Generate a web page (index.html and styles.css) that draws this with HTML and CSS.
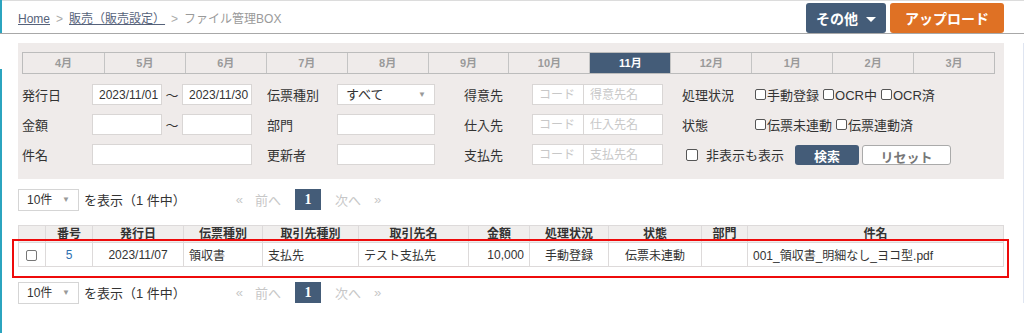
FILE: index.html
```html
<!DOCTYPE html>
<html lang="ja">
<head>
    <meta charset="UTF-8">
    <title>ファイル管理BOX</title>
    <link rel="stylesheet" href="styles.css">
</head>
<body>

<!-- ヘッダー -->
<div class="topbar">
    <div class="breadcrumb">
        <a href="#">Home</a><span class="sep">&gt;</span><a href="#">販売（販売設定）</a><span class="sep">&gt;</span><span class="current">ファイル管理BOX</span>
    </div>
    <div class="top-buttons">
        <button class="btn-other">その他 <span class="caret"></span></button>
        <button class="btn-upload">アップロード</button>
    </div>
</div>

<div class="content">
    <!-- 検索パネル -->
    <div class="search-panel">
        <div class="months">
            <span>4月</span><span>5月</span><span>6月</span><span>7月</span><span>8月</span><span>9月</span>
            <span>10月</span><span class="active">11月</span><span>12月</span><span>1月</span><span>2月</span><span>3月</span>
        </div>

        <div class="form-row">
            <span class="lbl">発行日</span>
            <input class="in-s" type="text" value="2023/11/01">
            <span class="tilde">〜</span>
            <input class="in-s" type="text" value="2023/11/30">
            <span class="lbl lbl-mid">伝票種別</span>
            <div class="select-box">すべて<span class="arrow">▼</span></div>
            <span class="lbl-party">得意先</span>
            <input class="in-code" type="text" placeholder="コード">
            <input class="in-name" type="text" placeholder="得意先名">
            <span class="lbl lbl-right">処理状況</span>
            <span class="chk"><i class="cb"></i>手動登録</span>
            <span class="chk"><i class="cb"></i>OCR中</span>
            <span class="chk"><i class="cb"></i>OCR済</span>
        </div>

        <div class="form-row">
            <span class="lbl">金額</span>
            <input class="in-s" type="text">
            <span class="tilde">〜</span>
            <input class="in-s" type="text">
            <span class="lbl lbl-mid">部門</span>
            <input class="in-m" type="text">
            <span class="lbl-party">仕入先</span>
            <input class="in-code" type="text" placeholder="コード">
            <input class="in-name" type="text" placeholder="仕入先名">
            <span class="lbl lbl-right">状態</span>
            <span class="chk"><i class="cb"></i>伝票未連動</span>
            <span class="chk"><i class="cb"></i>伝票連動済</span>
        </div>

        <div class="form-row">
            <span class="lbl">件名</span>
            <input class="in-l" type="text">
            <span class="lbl lbl-mid">更新者</span>
            <input class="in-m" type="text">
            <span class="lbl-party">支払先</span>
            <input class="in-code" type="text" placeholder="コード">
            <input class="in-name" type="text" placeholder="支払先名">
            <span class="chk chk-hidden"><i class="cb"></i>非表示も表示</span>
            <button class="btn-search">検索</button>
            <button class="btn-reset">リセット</button>
        </div>
    </div>

    <!-- 件数・ページ -->
    <div class="list-bar">
        <div class="count-select">10件<span class="arrow">▼</span></div>
        <span class="count-text">を表示（1 件中）</span>
        <div class="pager">
            <span class="off">«</span><span class="off">前へ</span><span class="page">1</span><span class="off">次へ</span><span class="off">»</span>
        </div>
    </div>

    <div class="table-wrap">
        <table class="list">
            <colgroup>
                <col style="width:27px"><col style="width:47px"><col style="width:91px"><col style="width:79px">
                <col style="width:96px"><col style="width:110px"><col style="width:61px"><col style="width:79px">
                <col style="width:93px"><col style="width:46px"><col>
            </colgroup>
            <thead>
                <tr>
                    <th></th><th>番号</th><th>発行日</th><th>伝票種別</th><th>取引先種別</th><th>取引先名</th>
                    <th>金額</th><th>処理状況</th><th>状態</th><th>部門</th><th>件名</th>
                </tr>
            </thead>
            <tbody>
                <tr>
                    <td class="c"><i class="cb cb-row"></i></td>
                    <td class="c"><a href="#">5</a></td>
                    <td class="c">2023/11/07</td>
                    <td>領収書</td>
                    <td>支払先</td>
                    <td>テスト支払先</td>
                    <td class="r">10,000</td>
                    <td class="c">手動登録</td>
                    <td class="c">伝票未連動</td>
                    <td></td>
                    <td>001_領収書_明細なし_ヨコ型.pdf</td>
                </tr>
            </tbody>
        </table>
        <!-- 注釈の赤枠 -->
        <div class="highlight"></div>
    </div>

    <div class="list-bar list-bar-bottom">
        <div class="count-select">10件<span class="arrow">▼</span></div>
        <span class="count-text">を表示（1 件中）</span>
        <div class="pager">
            <span class="off">«</span><span class="off">前へ</span><span class="page">1</span><span class="off">次へ</span><span class="off">»</span>
        </div>
    </div>
</div>

</body>
</html>
```

FILE: styles.css
```css
body {
    margin: 0;
    font-family: "Liberation Sans", "Noto Sans CJK JP", sans-serif;
    font-size: 12px;
    color: #333;
    background-color: #fff;
    width: 1024px;
    height: 333px;
    overflow: hidden;
    position: relative;
}
body::before {
    content: "";
    position: absolute;
    left: 0;
    top: 0;
    width: 2px;
    height: 33px;
    background-color: #2ba4bf;
}
body::after {
    content: "";
    position: absolute;
    left: 0;
    top: 69px;
    width: 2px;
    bottom: 0;
    background-color: #2ba4bf;
}

/* ヘッダー */
.topbar {
    height: 32px;
    border-top: 1px solid #dcdcdc;
    border-bottom: 1px solid #a8a8a8;
    display: flex;
    align-items: center;
    justify-content: space-between;
    padding: 0 20px 0 18px;
}
.breadcrumb a {
    color: #56627a;
    text-decoration: underline;
}
.breadcrumb .sep {
    color: #aaa;
    margin: 0 6px;
}
.breadcrumb .current {
    color: #9a9a9a;
}
.top-buttons {
    display: flex;
    gap: 4px;
    padding-top: 1px;
}
.top-buttons button {
    height: 30px;
    border: none;
    border-radius: 3px;
    color: #fff;
    font-family: inherit;
    font-size: 14px;
    font-weight: bold;
}
.btn-other {
    width: 80px;
    background-color: #445c78;
}
.caret {
    display: inline-block;
    width: 0;
    height: 0;
    border-left: 5px solid transparent;
    border-right: 5px solid transparent;
    border-top: 5px solid #fff;
    vertical-align: middle;
    margin-left: 4px;
}
.btn-upload {
    width: 114px;
    background-color: #df7124;
}

/* コンテンツ */
.content {
    padding: 0 19px 0 18px;
    border-right: 1px solid #dfe5f1;
}
.search-panel {
    margin-top: 9px;
    background-color: #efebea;
    padding: 9px 9px 14px 4px;
}
.months {
    display: grid;
    grid-template-columns: repeat(12, 1fr);
    border: 1px solid #bcbcbc;
    height: 20px;
}
.months span {
    border-left: 1px solid #c4c4c4;
    text-align: center;
    line-height: 20px;
    font-size: 11px;
    font-weight: bold;
    color: #9a9a9a;
}
.months span:first-child {
    border-left: none;
}
.months span.active {
    background-color: #445c78;
    color: #fff;
}

.form-row {
    display: flex;
    align-items: center;
    height: 21px;
    margin-top: 9px;
}
.months + .form-row {
    margin-top: 10px;
}
.lbl {
    width: 70px;
    flex-shrink: 0;
    font-size: 13px;
}
.lbl-mid {
    margin-left: 15px;
}
.lbl-right {
    margin-left: 19px;
    width: 73px;
}
.lbl-party {
    width: 97px;
    text-align: center;
    font-size: 13px;
}
input[type="text"] {
    box-sizing: border-box;
    height: 21px;
    border: 1px solid #d9d6d5;
    background-color: #fff;
    font-family: inherit;
    font-size: 12px;
    color: #333;
    padding: 0 0 0 6px;
    margin: 0;
    outline: none;
}
input::placeholder {
    color: #c8c8c8;
}
.in-s {
    width: 70px;
}
.in-l {
    width: 160px;
}
.in-m {
    width: 98px;
}
.in-code {
    width: 52px;
}
.in-name {
    width: 79px;
    border-left: none !important;
}
.tilde {
    width: 20px;
    text-align: center;
    font-size: 13px;
}
.select-box {
    box-sizing: border-box;
    width: 98px;
    height: 21px;
    background-color: #fff;
    border: 1px solid #d9d6d5;
    padding: 0 8px;
    line-height: 19px;
    font-size: 13px;
    display: flex;
    justify-content: space-between;
}
.arrow {
    font-size: 8px;
    color: #999;
}
.chk {
    display: flex;
    align-items: center;
    font-size: 13px;
    margin-right: 4px;
}
.cb {
    display: inline-block;
    box-sizing: border-box;
    width: 11px;
    height: 11px;
    border: 1px solid #555;
    border-radius: 2px;
    background-color: #fff;
    margin-right: 1px;
}
.chk-hidden {
    margin-left: 23px;
    width: 105px;
}
.chk-hidden .cb {
    width: 12px;
    height: 12px;
    margin-right: 8px;
}
.btn-search,
.btn-reset {
    height: 20px;
    border-radius: 3px;
    font-family: inherit;
    font-size: 13px;
    font-weight: bold;
}
.btn-search {
    width: 64px;
    border: none;
    background-color: #445c78;
    color: #fff;
}
.btn-reset {
    width: 89px;
    margin-left: 3px;
    border: 1px solid #aaa;
    background-color: #fff;
    color: #777;
}

/* 件数・ページ */
.list-bar {
    display: flex;
    align-items: center;
    margin-top: 10px;
    height: 21px;
}
.list-bar-bottom {
    margin-top: 15px;
}
.count-select {
    box-sizing: border-box;
    width: 61px;
    height: 22px;
    border: 1px solid #d5d5d5;
    padding: 0 8px;
    line-height: 20px;
    display: flex;
    justify-content: space-between;
}
.count-text {
    margin-left: 5px;
    font-size: 13px;
}
.pager {
    display: flex;
    align-items: center;
    margin-left: 50px;
    font-size: 13px;
}
.pager .off {
    color: #c7c7c7;
    margin-right: 12px;
}
.pager .off:nth-child(2) {
    margin-right: 14px;
}
.pager .off:nth-child(4) {
    margin-right: 13px;
}
.pager .page {
    width: 26px;
    height: 21px;
    background-color: #445c78;
    color: #fff;
    text-align: center;
    line-height: 21px;
    font-family: "Liberation Serif", serif;
    font-weight: bold;
    font-size: 14px;
    margin-right: 14px;
}

/* 一覧テーブル */
.table-wrap {
    position: relative;
    margin-top: 15px;
}
.list {
    width: 100%;
    border-collapse: collapse;
    table-layout: fixed;
}
.list th,
.list td {
    border: 1px solid #dddada;
    padding: 0 5px;
    white-space: nowrap;
    overflow: hidden;
}
.list th {
    height: 16px;
    background-color: #f0eeed;
    font-size: 12px;
    font-weight: bold;
    line-height: 16px;
    color: #333;
}
.list td {
    height: 23px;
    font-size: 12px;
}
.list td.c {
    text-align: center;
}
.list td.r {
    text-align: right;
}
.list td a {
    color: #2d6fb0;
    text-decoration: none;
}
.cb-row {
    width: 11px;
    height: 11px;
    border-color: #777;
    vertical-align: middle;
}
.highlight {
    position: absolute;
    left: -6px;
    right: -5px;
    top: 14px;
    height: 35px;
    border: 2px solid #ee0b0b;
}
```
